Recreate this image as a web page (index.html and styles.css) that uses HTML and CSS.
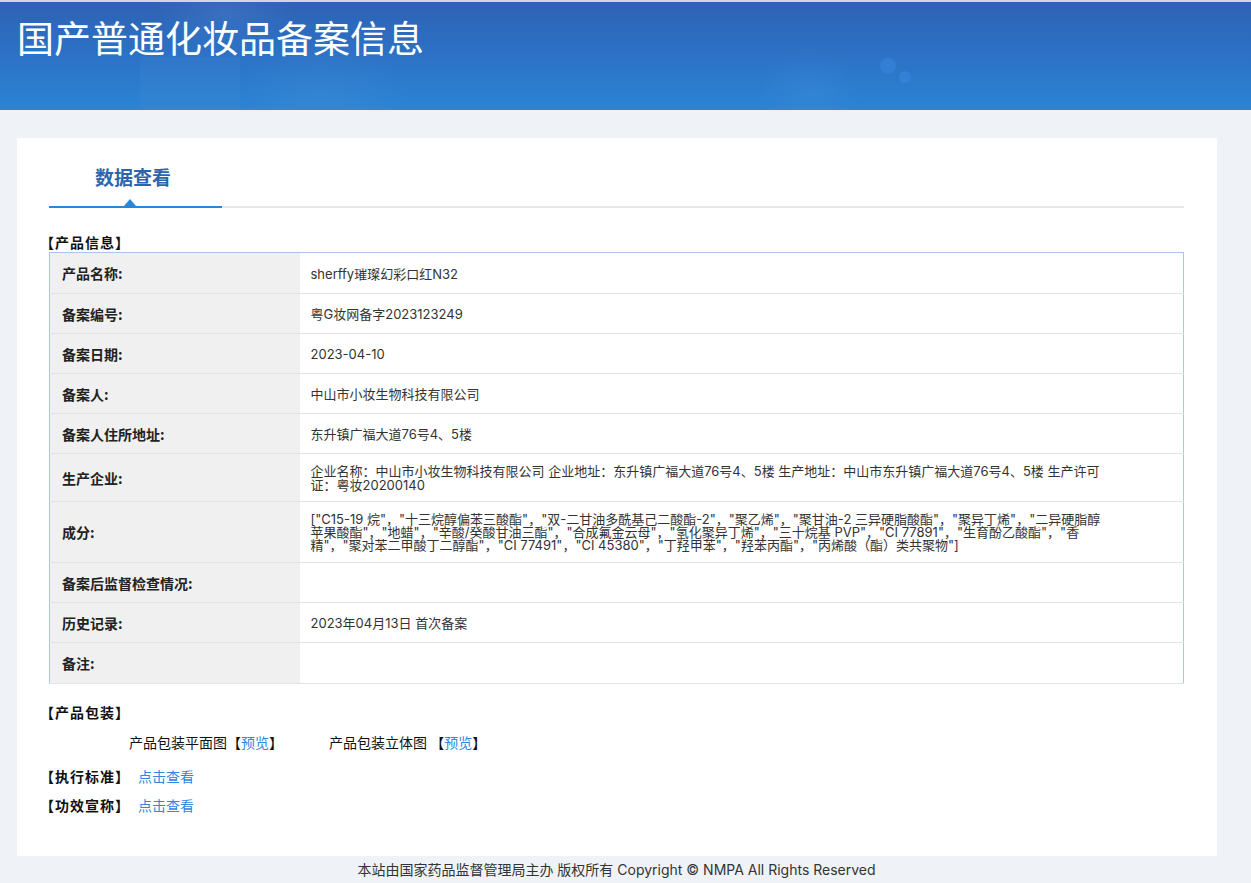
FILE: index.html
```html
<!DOCTYPE html>
<html lang="zh-CN">
<head>
<meta charset="utf-8">
<title>国产普通化妆品备案信息</title>
<link rel="stylesheet" href="styles.css">
</head>
<body>
<header class="banner">
  <span class="dot dot-a"></span>
  <span class="dot dot-b"></span>
  <h1 class="banner-title">国产普通化妆品备案信息</h1>
</header>
<main class="card">
  <div class="tabs">
    <div class="tab active">数据查看<span class="tab-arrow"></span></div>
  </div>
  <div class="sec-title">【产品信息】</div>
  <table class="info">
    <tr><th>产品名称:</th><td>sherffy璀璨幻彩口红N32</td></tr>
    <tr><th>备案编号:</th><td>粤G妆网备字2023123249</td></tr>
    <tr><th>备案日期:</th><td>2023-04-10</td></tr>
    <tr><th>备案人:</th><td>中山市小妆生物科技有限公司</td></tr>
    <tr><th>备案人住所地址:</th><td>东升镇广福大道76号4、5楼</td></tr>
    <tr class="multi"><th>生产企业:</th><td>企业名称：中山市小妆生物科技有限公司 企业地址：东升镇广福大道76号4、5楼 生产地址：中山市东升镇广福大道76号4、5楼 生产许可证：粤妆20200140</td></tr>
    <tr class="multi tight"><th>成分:</th><td>["C15-19 烷"，"十三烷醇偏苯三酸酯"，"双-二甘油多酰基己二酸酯-2"，"聚乙烯"，"聚甘油-2 三异硬脂酸酯"，"聚异丁烯"，"二异硬脂醇苹果酸酯"，"地蜡"，"辛酸/癸酸甘油三酯"，"合成氟金云母"，"氢化聚异丁烯"，"三十烷基 PVP"，"CI 77891"，"生育酚乙酸酯"，"香精"，"聚对苯二甲酸丁二醇酯"，"CI 77491"，"CI 45380"，"丁羟甲苯"，"羟苯丙酯"，"丙烯酸（酯）类共聚物"]</td></tr>
    <tr><th>备案后监督检查情况:</th><td></td></tr>
    <tr><th>历史记录:</th><td>2023年04月13日 首次备案</td></tr>
    <tr><th>备注:</th><td></td></tr>
  </table>
  <div class="sec-title sec-pack">【产品包装】</div>
  <div class="pack-row">
    <span class="pack-item">产品包装平面图【<a class="link" href="#">预览</a>】</span>
    <span class="pack-item">产品包装立体图 【<a class="link" href="#">预览</a>】</span>
  </div>
  <div class="sec-title sec-line sec-std"><span class="sec-name">【执行标准】</span><a class="link" href="#">点击查看</a></div>
  <div class="sec-title sec-line sec-eff"><span class="sec-name">【功效宣称】</span><a class="link" href="#">点击查看</a></div>
</main>
<footer class="footer">本站由国家药品监督管理局主办 版权所有 Copyright © NMPA All Rights Reserved</footer>
</body>
</html>
```
FILE: styles.css
```css
* { box-sizing: border-box; }
html, body { margin: 0; padding: 0; }
body {
  background: #eff3f7;
  font-family: "Inter", "Noto Sans CJK SC", sans-serif;
  color: #333;
  font-size: 13px;
}
.banner {
  position: relative;
  height: 110px;
  border-top: 2px solid #d6d6d6;
  overflow: hidden;
  background:
    radial-gradient(ellipse 70px 40px at 225px 10px, rgba(120,170,230,0.14), rgba(120,170,230,0) 100%),
    radial-gradient(ellipse 90px 60px at 320px 95px, rgba(110,170,235,0.12), rgba(110,170,235,0) 100%),
    radial-gradient(ellipse 50px 45px at 810px 90px, rgba(90,160,235,0.15), rgba(90,160,235,0) 100%),
    linear-gradient(180deg, #2e62b4 0%, #2c72c6 50%, #2a84d4 100%);
}
.banner::before {
  content: "";
  position: absolute;
  left: 140px;
  top: 55px;
  width: 100px;
  height: 60px;
  background: rgba(120,160,230,0.08);
}
.dot {
  position: absolute;
  border-radius: 50%;
  background: rgba(60,140,230,0.45);
}
.dot-a { left: 880px; top: 56px; width: 16px; height: 16px; }
.dot-b { left: 899px; top: 69px; width: 12px; height: 12px; }
.banner-title {
  position: relative;
  margin: 0;
  padding: 13px 0 0 17px;
  font-family: "Noto Sans CJK SC", sans-serif;
  font-weight: 400;
  font-size: 37px;
  line-height: 44px;
  color: #fff;
}
.card {
  display: block;
  margin: 28px 34px 0 17px;
  width: 1200px;
  height: 718px;
  background: #fff;
  padding: 0 33px 0 32px;
}
.tabs {
  height: 70px;
  border-bottom: 2px solid #e6e8eb;
  display: flex;
  align-items: flex-end;
}
.tab {
  position: relative;
  width: 173px;
  height: 70px;
  margin-bottom: -2px;
  border-bottom: 2px solid #2a86d8;
  font-family: "Noto Sans CJK SC", sans-serif;
  font-weight: 700;
  font-size: 19px;
  color: #2c65ad;
  padding: 26px 0 0 46px;
  line-height: 26px;
}
.tab-arrow {
  position: absolute;
  left: 75px;
  bottom: 0;
  width: 0;
  height: 0;
  border-left: 6px solid transparent;
  border-right: 6px solid transparent;
  border-bottom: 7px solid #2a86d8;
}
.sec-title {
  font-family: "Noto Sans CJK SC", sans-serif;
  font-weight: 700;
  font-size: 14px;
  line-height: 20px;
  color: #111;
  letter-spacing: 1px;
  margin: 24px 0 0 -9px;
  display: flex;
  align-items: center;
}
.sec-name { width: 98px; flex: none; }
.info {
  width: 100%;
  border-collapse: collapse;
  border: 1px solid #a9c6ea;
  font-size: 13px;
}
.info tr { height: 40px; }
.info tr:first-child { height: 41px; }
.info tr:last-child { height: 41px; }
.info th, .info td {
  border-bottom: 1px solid #e3e3e3;
  vertical-align: middle;
  text-align: left;
  line-height: 14px;
}
.info th {
  width: 250px;
  background: #f0f0f0;
  font-family: "Noto Sans CJK SC", sans-serif;
  font-weight: 700;
  font-size: 14px;
  color: #222;
  padding: 0 12px;
}
.info td {
  color: #333;
  padding: 10px 60px 9px 11px;
}
.info tr.tight td { line-height: 13px; padding: 11px 72px 10px 11px; }
.sec-pack { margin-top: 18px; }
.pack-row {
  margin-top: 10px;
  padding-left: 80px;
  font-family: "Noto Sans CJK SC", sans-serif;
  font-size: 14px;
  line-height: 20px;
  color: #111;
  display: flex;
}
.pack-item { width: 200px; }
.link { color: #3186de; text-decoration: none; font-weight: 400; letter-spacing: 0; }
.sec-std { margin-top: 14px; }
.sec-eff { margin-top: 9px; }
.footer {
  height: 27px;
  text-align: center;
  font-size: 14px;
  line-height: 28px;
  color: #333;
  padding-right: 18px;
}
```
